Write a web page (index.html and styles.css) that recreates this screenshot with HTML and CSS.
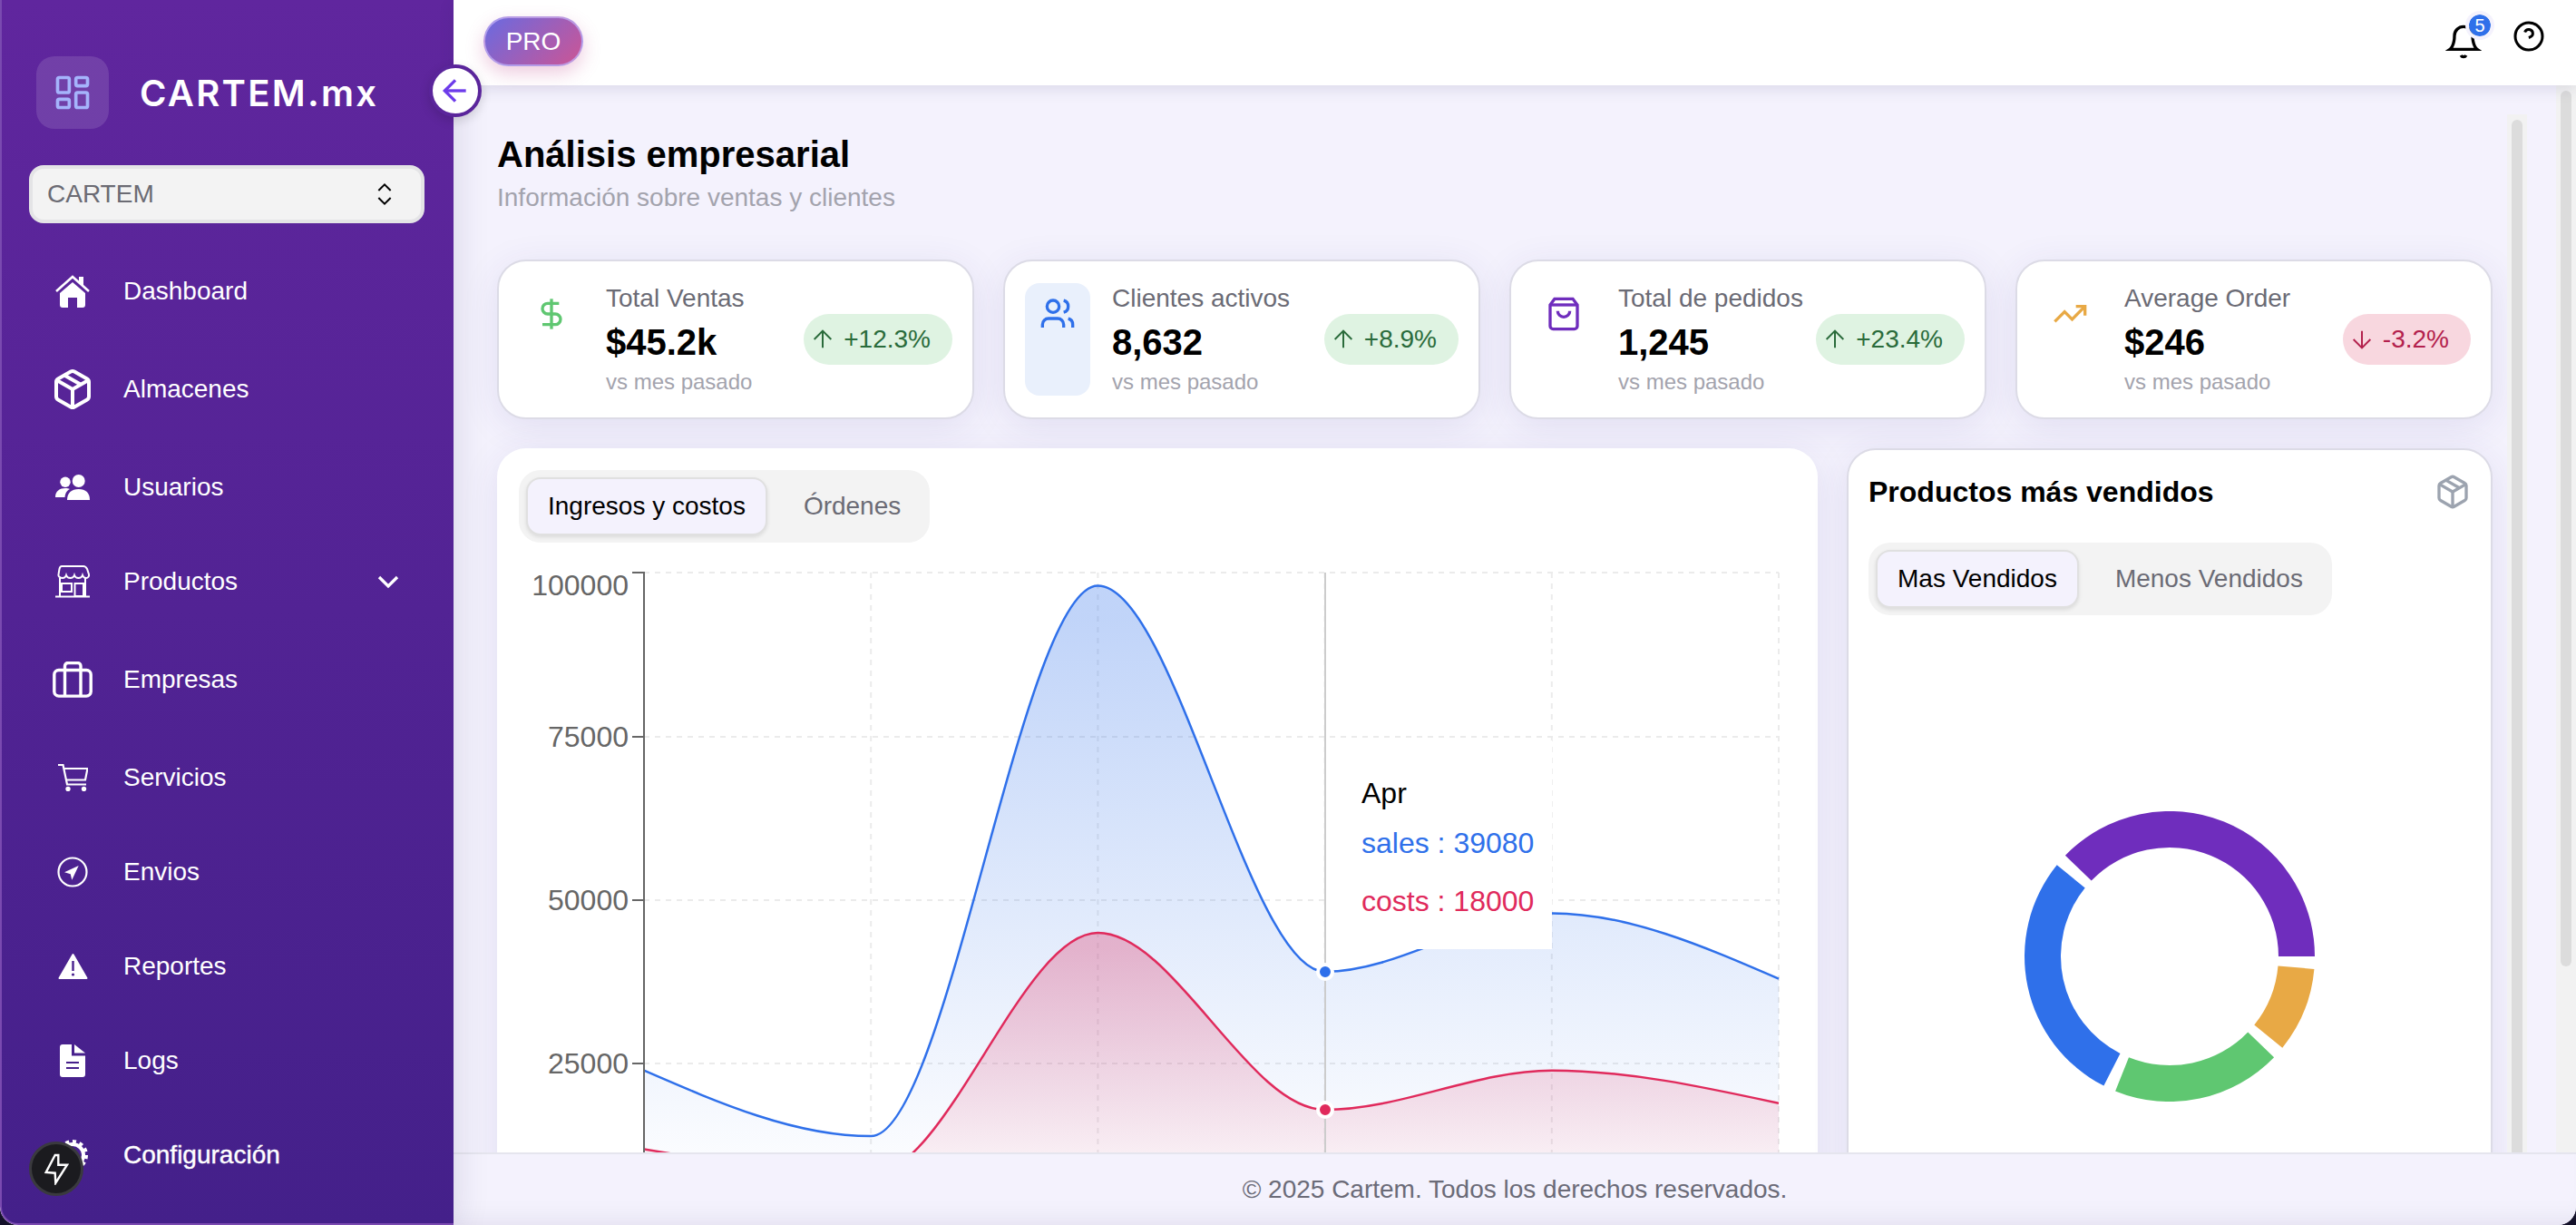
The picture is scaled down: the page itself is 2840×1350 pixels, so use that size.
FILE: index.html
```html
<!DOCTYPE html>
<html lang="es">
<head>
    <meta charset="UTF-8">
    <meta name="viewport" content="width=device-width, initial-scale=1.0">
    <title>Cartem - Análisis empresarial</title>
    <link rel="stylesheet" href="styles.css">
</head>
<body>
    <div class="app">
        <!-- Barra lateral -->
        <aside class="sidebar">
            <div class="logo-row">
                <div class="logo-box">
                    <svg class="logo-icon" viewBox="0 0 24 24"><rect x="3" y="3" width="7" height="9" rx="1"/><rect x="14" y="3" width="7" height="5" rx="1"/><rect x="14" y="12" width="7" height="9" rx="1"/><rect x="3" y="16" width="7" height="5" rx="1"/></svg>
                </div>
                <span class="logo-text">CARTEM.mx</span>
            </div>

            <div class="company-select">
                <span>CARTEM</span>
                <svg class="select-icon" viewBox="0 0 24 24"><path d="m7 15 5 5 5-5"/><path d="m7 9 5-5 5 5"/></svg>
            </div>

            <nav class="nav-list">
                <a class="nav-item nav-gap">
                    <span class="nav-icon">
                        <svg width="38" height="36" viewBox="0 0 38 36"><path d="M5 20 19 8l14 12v13a3 3 0 0 1-3 3h-6V25H14v11H8a3 3 0 0 1-3-3z" fill="#fff"/><path d="M1 18 19 2l18 16" fill="none" stroke="#fff" stroke-width="2.6"/><path d="M26 2h5v10l-5-4z" fill="#fff"/></svg>
                    </span>
                    Dashboard
                </a>
                <a class="nav-item nav-gap">
                    <span class="nav-icon">
                        <svg class="line-icon" width="48" height="48" viewBox="0 0 24 24"><path d="M11 21.73a2 2 0 0 0 2 0l7-4A2 2 0 0 0 21 16V8a2 2 0 0 0-1-1.73l-7-4a2 2 0 0 0-2 0l-7 4A2 2 0 0 0 3 8v8a2 2 0 0 0 1 1.73z"/><path d="M12 22V12"/><polyline points="3.29 7 12 12 20.71 7"/><path d="m7.5 4.27 9 5.15"/></svg>
                    </span>
                    Almacenes
                </a>
                <a class="nav-item">
                    <span class="nav-icon">
                        <svg width="38" height="28" viewBox="0 0 38 28" fill="#fff"><circle cx="25.7" cy="7" r="7"/><path d="M13 28c0-8 5-12 12.7-12S38 20 38 28z"/><circle cx="11" cy="8.3" r="5.7"/><path d="M0 25c0-7 5-10 11-10 2 0 3.500.3 5 1-4 2-5 5-5.500 9z"/></svg>
                    </span>
                    Usuarios
                </a>
                <a class="nav-item nav-gap">
                    <span class="nav-icon">
                        <svg width="38" height="36" viewBox="0 0 38 36" fill="none" stroke="#fff" stroke-width="2"><path d="M7 1h24c2 0 3 1 4 3l2 6c.5 2-1 4-3 4-3 0-4-3-4-3s-1 3-4.500 3S21 11 21 11s-1 3-4.500 3S12 11 12 11s-1 3-4 3c-3 0-5-2-4.500-4l1-6C5 2 6 1 7 1z"/><path d="M5 14v20M33 14v20M0 34.500h38"/><rect x="7" y="20" width="11" height="9"/><rect x="21.500" y="20" width="9.500" height="14"/></svg>
                    </span>
                    Productos
                    <svg class="nav-chevron" viewBox="0 0 24 24"><path d="m6 9 6 6 6-6"/></svg>
                </a>
                <a class="nav-item nav-gap">
                    <span class="nav-icon">
                        <svg width="44" height="40" viewBox="0 0 44 40" fill="none" stroke="#fff" stroke-width="3.400"><rect x="1.800" y="9.500" width="40.400" height="28.600" rx="5"/><path d="M13.500 9V5a3.500 3.500 0 0 1 3.500-3.500h10A3.500 3.500 0 0 1 31 5v4M13.500 9v29M31 9v29"/></svg>
                    </span>
                    Empresas
                </a>
                <a class="nav-item">
                    <span class="nav-icon">
                        <svg width="33" height="30" viewBox="0 0 33 30" fill="none" stroke="#fff" stroke-width="2.200"><path d="M0 1h5.500L10 22.500h21"/><path d="M6.500 5h26L30 17.500H9"/><circle cx="11" cy="27.500" r="1.600" fill="#fff"/><circle cx="28.500" cy="27.500" r="1.600" fill="#fff"/></svg>
                    </span>
                    Servicios
                </a>
                <a class="nav-item">
                    <span class="nav-icon">
                        <svg width="36" height="36" viewBox="-18 -18 36 36"><circle r="15.500" fill="none" stroke="#fff" stroke-width="2.200"/><path d="M6.700-7-.7 8.700-2.300 2.300-9 .3z" fill="#fff"/></svg>
                    </span>
                    Envios
                </a>
                <a class="nav-item">
                    <span class="nav-icon">
                        <svg width="33" height="30" viewBox="0 0 33 30"><path d="M16.500 2 31.500 28h-30z" fill="#fff" stroke="#fff" stroke-width="2" stroke-linejoin="round"/><rect x="15.300" y="9" width="2.400" height="11" fill="#4a228f"/><circle cx="16.500" cy="24" r="1.600" fill="#4a228f"/></svg>
                    </span>
                    Reportes
                </a>
                <a class="nav-item">
                    <span class="nav-icon">
                        <svg width="28" height="36" viewBox="0 0 28 36"><path d="M3 0h10v12.500h15V33a3 3 0 0 1-3 3H3a3 3 0 0 1-3-3V3a3 3 0 0 1 3-3z" fill="#fff"/><path d="M16 0l12 9.500H16z" fill="#fff"/><path d="M7 20h14M7 26h14" stroke="#47218c" stroke-width="2"/></svg>
                    </span>
                    Logs
                </a>
                <a class="nav-item nav-strong">
                    <span class="nav-icon">
                        <svg width="36" height="36" viewBox="-18 -18 36 36" fill="none" stroke="#fff"><circle r="12" stroke-width="4"/><circle r="15" stroke-width="4" stroke-dasharray="4 3.800"/></svg>
                    </span>
                    Configuración
                </a>
            </nav>

            <!-- Botón flotante -->
            <div class="bolt-badge">
                <svg width="32" height="36" viewBox="-16 -18 32 36"><path d="M-1.300-15-11.300 4l10 .7L-.7 15.700 12-4.300H2.300V-15z" fill="none" stroke="#fff" stroke-width="2.400"/></svg>
            </div>
        </aside>

        <button class="collapse-button" aria-label="Colapsar menú">
            <svg viewBox="0 0 24 24"><path d="m12 19-7-7 7-7"/><path d="M19 12H5"/></svg>
        </button>

        <div class="main">
            <header class="topbar">
                <span class="pro-badge">PRO</span>
                <div class="topbar-actions">
                    <span class="bell">
                        <svg class="line-dark" width="40" height="40" viewBox="0 0 24 24"><path d="M6 8a6 6 0 0 1 12 0c0 7 3 9 3 9H3s3-2 3-9"/><path d="M10.300 21a1.940 1.940 0 0 0 3.400 0"/></svg>
                        <span class="bell-count">5</span>
                    </span>
                    <svg class="line-dark" width="36" height="36" viewBox="0 0 24 24"><circle cx="12" cy="12" r="10"/><path d="M9.090 9a3 3 0 0 1 5.830 1c0 2-3 3-3 3"/><path d="M12 17h.01"/></svg>
                </div>
            </header>

            <div class="page-scroll">
                <div class="page-pane">
                    <div class="content-scroll">
                        <div class="content-body">
                            <h1 class="page-title">Análisis empresarial</h1>
                            <p class="page-subtitle">Información sobre ventas y clientes</p>

                            <!-- Tarjetas de resumen -->
                            <section class="stats">
                                <div class="stat-card">
                                    <div class="stat-icon">
                                        <svg class="icon-green" viewBox="0 0 24 24"><line x1="12" y1="2" x2="12" y2="22"/><path d="M17 5H9.500a3.500 3.500 0 0 0 0 7h5a3.500 3.500 0 0 1 0 7H6"/></svg>
                                    </div>
                                    <div class="stat-text">
                                        <p class="stat-label">Total Ventas</p>
                                        <p class="stat-value">$45.2k</p>
                                        <p class="stat-note">vs mes pasado</p>
                                    </div>
                                    <span class="trend trend-up">
                                        <svg viewBox="0 0 24 24"><path d="m5 12 7-7 7 7"/><path d="M12 19V5"/></svg>
                                        +12.3%
                                    </span>
                                </div>
                                <div class="stat-card">
                                    <div class="stat-icon stat-icon-hover">
                                        <svg class="icon-blue" viewBox="0 0 24 24"><path d="M16 21v-2a4 4 0 0 0-4-4H6a4 4 0 0 0-4 4v2"/><circle cx="9" cy="7" r="4"/><path d="M22 21v-2a4 4 0 0 0-3-3.870"/><path d="M16 3.130a4 4 0 0 1 0 7.750"/></svg>
                                    </div>
                                    <div class="stat-text">
                                        <p class="stat-label">Clientes activos</p>
                                        <p class="stat-value">8,632</p>
                                        <p class="stat-note">vs mes pasado</p>
                                    </div>
                                    <span class="trend trend-up">
                                        <svg viewBox="0 0 24 24"><path d="m5 12 7-7 7 7"/><path d="M12 19V5"/></svg>
                                        +8.9%
                                    </span>
                                </div>
                                <div class="stat-card">
                                    <div class="stat-icon">
                                        <svg class="icon-purple" viewBox="0 0 24 24"><path d="M6 2 3 6v14a2 2 0 0 0 2 2h14a2 2 0 0 0 2-2V6l-3-4z"/><path d="M3 6h18"/><path d="M16 10a4 4 0 0 1-8 0"/></svg>
                                    </div>
                                    <div class="stat-text">
                                        <p class="stat-label">Total de pedidos</p>
                                        <p class="stat-value">1,245</p>
                                        <p class="stat-note">vs mes pasado</p>
                                    </div>
                                    <span class="trend trend-up">
                                        <svg viewBox="0 0 24 24"><path d="m5 12 7-7 7 7"/><path d="M12 19V5"/></svg>
                                        +23.4%
                                    </span>
                                </div>
                                <div class="stat-card">
                                    <div class="stat-icon">
                                        <svg class="icon-orange" viewBox="0 0 24 24"><polyline points="22 7 13.500 15.500 8.500 10.500 2 17"/><polyline points="16 7 22 7 22 13"/></svg>
                                    </div>
                                    <div class="stat-text">
                                        <p class="stat-label">Average Order</p>
                                        <p class="stat-value">$246</p>
                                        <p class="stat-note">vs mes pasado</p>
                                    </div>
                                    <span class="trend trend-down">
                                        <svg viewBox="0 0 24 24"><path d="M12 5v14"/><path d="m19 12-7 7-7-7"/></svg>
                                        -3.2%
                                    </span>
                                </div>
                            </section>

                            <section class="charts">
                                <!-- Gráfica de ingresos -->
                                <div class="chart-card">
                                    <div class="tabs">
                                        <span class="tab tab-active">Ingresos y costos</span>
                                        <span class="tab">Órdenes</span>
                                    </div>
                                    <div class="chart-wrap">
                                        <svg class="area-chart" width="1408" height="780" viewBox="572 614 1408 780">
                                            <defs>
                                                <linearGradient id="salesFill" x1="0" y1="0" x2="0" y2="1">
                                                    <stop offset="0.05" stop-color="#2f70ea" stop-opacity="0.3"/>
                                                    <stop offset="0.95" stop-color="#2f70ea" stop-opacity="0"/>
                                                </linearGradient>
                                                <linearGradient id="costsFill" x1="0" y1="0" x2="0" y2="1">
                                                    <stop offset="0.05" stop-color="#e02a5c" stop-opacity="0.3"/>
                                                    <stop offset="0.95" stop-color="#e02a5c" stop-opacity="0"/>
                                                </linearGradient>
                                            </defs>
                                            <g class="grid-lines">
                                                <path d="M710 631H1961M710 812H1961M710 992H1961M710 1172H1961"/>
                                                <path d="M960.200 631V1353M1210.400 631V1353M1460.600 631V1353M1710.800 631V1353M1961 631V1353"/>
                                            </g>
                                            <path d="M710 1179.700C793.400 1215.900 876.800 1252.100 960.200 1252.100C1043.600 1252.100 1127 645.400 1210.400 645.400C1293.800 645.400 1377.200 1070.800 1460.600 1070.800C1544 1070.800 1627.400 1006.400 1710.800 1006.400C1794.200 1006.400 1877.600 1042.500 1961 1078.600V1353H710Z" fill="url(#salesFill)"/>
                                            <path d="M710 1179.700C793.400 1215.900 876.800 1252.100 960.200 1252.100C1043.600 1252.100 1127 645.400 1210.400 645.400C1293.800 645.400 1377.200 1070.800 1460.600 1070.800C1544 1070.800 1627.400 1006.400 1710.800 1006.400C1794.200 1006.400 1877.600 1042.500 1961 1078.600" class="line-sales"/>
                                            <path d="M710 1266.400C793.400 1280.400 876.800 1294.500 960.200 1294.500C1043.600 1294.500 1127 1028.100 1210.400 1028.100C1293.800 1028.100 1377.200 1223 1460.600 1223C1544 1223 1627.400 1179.700 1710.800 1179.700C1794.200 1179.700 1877.600 1197.800 1961 1215.800V1353H710Z" fill="url(#costsFill)"/>
                                            <path d="M710 1266.400C793.400 1280.400 876.800 1294.500 960.200 1294.500C1043.600 1294.500 1127 1028.100 1210.400 1028.100C1293.800 1028.100 1377.200 1223 1460.600 1223C1544 1223 1627.400 1179.700 1710.800 1179.700C1794.200 1179.700 1877.600 1197.800 1961 1215.800" class="line-costs"/>
                                            <path class="axis-line" d="M697 631H710V1353M697 812H710M697 992H710M697 1172H710"/>
                                            <text class="axis-label" x="693" y="656">100000</text>
                                            <text class="axis-label" x="693" y="823">75000</text>
                                            <text class="axis-label" x="693" y="1003">50000</text>
                                            <text class="axis-label" x="693" y="1183">25000</text>
                                            <line class="cursor-line" x1="1461" y1="631" x2="1461" y2="1353"/>
                                            <circle cx="1461" cy="1071" r="8" fill="#2f70ea" stroke="#fff" stroke-width="4"/>
                                            <circle cx="1461" cy="1223" r="8" fill="#e02a5c" stroke="#fff" stroke-width="4"/>
                                        </svg>
                                        <div class="chart-tooltip">
                                            <p class="tooltip-title">Apr</p>
                                            <p class="tooltip-row tooltip-sales">sales : 39080</p>
                                            <p class="tooltip-row tooltip-costs">costs : 18000</p>
                                        </div>
                                    </div>
                                </div>

                                <!-- Productos más vendidos -->
                                <div class="side-card">
                                    <div class="side-head">
                                        <h2 class="side-title">Productos más vendidos</h2>
                                        <svg class="side-icon" viewBox="0 0 24 24"><path d="M11 21.730a2 2 0 0 0 2 0l7-4A2 2 0 0 0 21 16V8a2 2 0 0 0-1-1.730l-7-4a2 2 0 0 0-2 0l-7 4A2 2 0 0 0 3 8v8a2 2 0 0 0 1 1.730z"/><path d="M12 22V12"/><polyline points="3.290 7 12 12 20.710 7"/><path d="m7.500 4.270 9 5.150"/></svg>
                                    </div>
                                    <div class="tabs">
                                        <span class="tab tab-active">Mas Vendidos</span>
                                        <span class="tab">Menos Vendidos</span>
                                    </div>
                                    <div class="donut-wrap">
                                        <svg width="320" height="320" viewBox="-160 -160 320 320">
                                            <path d="M160 0A160 160 0 0 0-115.100-111.200L-86.300-83.400A120 120 0 0 1 120 0Z" fill="#6f2dbd"/>
                                            <path d="M-124.300-100.700A160 160 0 0 0-72.600 142.600L-54.500 106.900A120 120 0 0 1-93.300-75.500Z" fill="#2f70ea"/>
                                            <path d="M-59.900 148.400A160 160 0 0 0 115.100 111.200L86.300 83.400A120 120 0 0 1-45 111.300Z" fill="#5fc771"/>
                                            <path d="M124.300 100.700A160 160 0 0 0 159.400 13.900L119.500 10.500A120 120 0 0 1 93.300 75.500Z" fill="#e8a945"/>
                                        </svg>
                                    </div>
                                </div>
                            </section>
                        </div>
                        <div class="scroll-rail"><div class="scroll-thumb content-thumb"></div></div>
                    </div>
                </div>
                <div class="scroll-rail"><div class="scroll-thumb page-thumb"></div></div>
            </div>

            <footer class="footer">© 2025 Cartem. Todos los derechos reservados.</footer>
        </div>
    </div>
</body>
</html>
```

FILE: styles.css
```css
/* Estilos generales */
* {
    box-sizing: border-box;
}

html,
body {
    height: 100%;
}

body {
    margin: 0;
    overflow: hidden;
    font-family: "Liberation Sans", Arial, sans-serif;
    background-color: #14112a;
    color: #000;
}

p,
h1,
h2 {
    margin: 0;
}

.app {
    position: relative;
    display: flex;
    height: 100vh;
    overflow: hidden;
    border-bottom-left-radius: 20px;
    border-bottom-right-radius: 20px;
    background: #f4f2fd;
}

/* Barra lateral */
.sidebar {
    position: relative;
    z-index: 2;
    flex: 0 0 500px;
    padding-top: 62px;
    background: linear-gradient(180deg, #60269e 0%, #44208a 100%);
    border-left: 2px solid #7a4ab0;
    border-bottom: 2px solid #7a4ab0;
    border-bottom-left-radius: 20px;
    box-shadow: 0 0 40px rgba(30, 20, 80, 0.14);
}

.logo-row {
    display: flex;
    align-items: center;
    gap: 34px;
    padding-left: 38px;
}

.logo-box {
    display: flex;
    align-items: center;
    justify-content: center;
    width: 80px;
    height: 80px;
    border-radius: 20px;
    background: rgba(255, 255, 255, 0.12);
}

.logo-icon {
    width: 44px;
    height: 44px;
    fill: none;
    stroke: #a5b4fc;
    stroke-width: 2;
}

.logo-text {
    font-family: Inter, "Liberation Sans", sans-serif;
    font-size: 40px;
    font-weight: 600;
    letter-spacing: 2.3px;
    color: #fff;
}

.company-select {
    display: flex;
    align-items: center;
    justify-content: space-between;
    height: 64px;
    margin: 40px 32px 0 30px;
    padding: 0 24px 0 16px;
    font-size: 28px;
    color: #6b6b73;
    background: #f3f3f3;
    border: 4px solid #e4e4e6;
    border-radius: 16px;
}

.select-icon {
    width: 32px;
    height: 32px;
    fill: none;
    stroke: #000;
    stroke-width: 1.5;
}

.nav-list {
    display: flex;
    flex-direction: column;
    margin-top: 23px;
}

.nav-item {
    display: flex;
    align-items: center;
    gap: 26px;
    height: 104px;
    padding: 0 52px 0 48px;
    font-size: 28px;
    color: #fff;
}

.nav-gap {
    margin-bottom: 4px;
}

.nav-strong {
    -webkit-text-stroke: 0.4px #fff;
}

.nav-icon {
    display: flex;
    align-items: center;
    justify-content: center;
    flex: 0 0 60px;
}

.line-icon {
    fill: none;
    stroke: #fff;
    stroke-width: 2;
}

.nav-chevron {
    width: 40px;
    height: 40px;
    margin-left: auto;
    fill: none;
    stroke: #fff;
    stroke-width: 2;
}

.bolt-badge {
    position: absolute;
    left: 30px;
    top: 1258px;
    display: flex;
    align-items: center;
    justify-content: center;
    width: 60px;
    height: 60px;
    border-radius: 50%;
    background: #1b1b1f;
    border: 3px solid #3a3a3e;
}

.collapse-button {
    position: absolute;
    z-index: 4;
    left: 473px;
    top: 71px;
    display: flex;
    align-items: center;
    justify-content: center;
    width: 58px;
    height: 58px;
    padding: 0;
    border: 4px solid #5a259b;
    border-radius: 50%;
    background: #fff;
    box-shadow: 0 4px 12px rgba(0, 0, 0, 0.15);
}

.collapse-button svg {
    width: 40px;
    height: 40px;
    fill: none;
    stroke: #6d3bea;
    stroke-width: 2;
}

/* Área principal */
.main {
    flex: 1;
    display: flex;
    flex-direction: column;
    min-width: 0;
}

.topbar {
    position: relative;
    z-index: 3;
    display: flex;
    align-items: center;
    justify-content: space-between;
    flex: 0 0 94px;
    padding: 0 34px 0 33px;
    background: #fff;
    box-shadow: 0 4px 16px rgba(40, 30, 90, 0.12);
}

.pro-badge {
    display: flex;
    align-items: center;
    justify-content: center;
    width: 110px;
    height: 55px;
    margin-bottom: 3px;
    font-size: 28px;
    color: #fff;
    border: 2px solid rgba(190, 170, 240, 0.8);
    border-radius: 28px;
    background: linear-gradient(135deg, #6a6ae0 0%, #cc5595 100%);
    box-shadow: 0 8px 20px rgba(200, 85, 150, 0.3);
}

.topbar-actions {
    display: flex;
    align-items: flex-start;
    gap: 34px;
    margin-top: -6px;
}

.bell {
    position: relative;
    display: block;
    height: 40px;
    margin-top: 4px;
}

.line-dark {
    display: block;
    fill: none;
    stroke: #000;
    stroke-width: 2;
}

.bell-count {
    position: absolute;
    top: -14px;
    right: -14px;
    display: flex;
    align-items: center;
    justify-content: center;
    width: 32px;
    height: 32px;
    font-size: 20px;
    color: #fff;
    background: #2f70ea;
    background-clip: padding-box;
    border: 4px solid #f4f2fd;
    border-radius: 50%;
}

/* Contenido con sus barras de desplazamiento */
.page-scroll {
    flex: 1;
    display: flex;
    min-height: 0;
    overflow: hidden;
}

.page-pane {
    flex: 1;
    min-width: 0;
    padding: 32px 32px 0;
}

.content-scroll {
    display: flex;
    height: 1351px;
}

.content-body {
    flex: 1;
    min-width: 0;
    padding: 16px;
}

.scroll-rail {
    flex: 0 0 22px;
    padding: 6px 5px;
    background: #f2f2f2;
}

.scroll-thumb {
    background: #dcdcdc;
    border-radius: 6px;
}

.page-thumb {
    height: 965px;
}

.content-thumb {
    height: 1280px;
}

.page-title {
    font-size: 40px;
    line-height: 56px;
    font-weight: bold;
}

.page-subtitle {
    font-size: 28px;
    line-height: 40px;
    color: #a3a3ad;
}

/* Tarjetas de resumen */
.stats {
    display: grid;
    grid-template-columns: repeat(4, 1fr);
    gap: 32px;
    margin-top: 48px;
}

.stat-card {
    display: flex;
    align-items: center;
    height: 176px;
    padding: 24px;
    background: #fff;
    border: 2px solid #dcdbe6;
    border-radius: 32px;
    box-shadow: 0 8px 40px rgba(60, 50, 140, 0.1);
}

.stat-icon {
    flex: 0 0 72px;
    align-self: stretch;
    margin-left: -2px;
    padding: 14px 16px;
    border-radius: 16px;
}

.stat-icon svg {
    display: block;
    width: 40px;
    height: 40px;
    fill: none;
    stroke-width: 2;
}

.stat-icon-hover {
    background: #e9f0fc;
}

.icon-green {
    stroke: #5fc771;
}

.icon-blue {
    stroke: #2f70ea;
}

.icon-purple {
    stroke: #6f2dbd;
}

.icon-orange {
    stroke: #e8a945;
}

.stat-text {
    margin-left: 24px;
    padding-bottom: 2px;
}

.stat-label {
    font-size: 28px;
    line-height: 40px;
    color: #6b6b75;
}

.stat-value {
    font-size: 40px;
    line-height: 56px;
    font-weight: bold;
}

.stat-note {
    font-size: 24px;
    line-height: 32px;
    color: #a3a3ad;
}

.trend {
    display: flex;
    align-items: center;
    gap: 7px;
    height: 56px;
    margin-left: auto;
    margin-right: -2px;
    padding: 0 24px 0 5px;
    font-size: 28px;
    border-radius: 28px;
}

.trend svg {
    width: 32px;
    height: 32px;
    fill: none;
    stroke: currentColor;
    stroke-width: 1.5;
}

.trend-up {
    color: #2a6b3b;
    background: #dff3e2;
}

.trend-down {
    color: #b3214d;
    background: #f8d7df;
}

/* Gráficas */
.charts {
    display: grid;
    grid-template-columns: 1fr 712px;
    gap: 32px;
    margin-top: 32px;
}

.chart-card {
    padding: 24px;
    background: #fff;
    border-radius: 32px;
    box-shadow: 0 8px 40px rgba(60, 50, 140, 0.1);
}

.side-card {
    padding: 22px;
    background: #fff;
    border: 2px solid #dcdbe6;
    border-radius: 32px;
    box-shadow: 0 8px 40px rgba(60, 50, 140, 0.1);
}

.tabs {
    display: inline-flex;
    gap: 16px;
    height: 80px;
    padding: 8px;
    background: #f3f3f3;
    border-radius: 24px;
}

.tab {
    display: flex;
    align-items: center;
    padding: 0 22px;
    font-size: 28px;
    color: #6b6b75;
    border: 2px solid transparent;
    border-radius: 16px;
}

.tab-active {
    color: #000;
    background: #f4f2fd;
    border-color: #e0e0e0;
    box-shadow: 0 2px 4px rgba(0, 0, 0, 0.1);
}

.chart-wrap {
    position: relative;
    margin-top: 16px;
}

.area-chart {
    display: block;
}

.grid-lines path {
    fill: none;
    stroke: #ebebeb;
    stroke-width: 2;
    stroke-dasharray: 6 6;
}

.line-sales,
.line-costs {
    fill: none;
    stroke-width: 2.5;
}

.line-sales {
    stroke: #2f70ea;
}

.line-costs {
    stroke: #e02a5c;
}

.axis-line {
    fill: none;
    stroke: #666;
    stroke-width: 2;
}

.axis-label {
    font-size: 32px;
    text-anchor: end;
    fill: #666;
}

.cursor-line {
    stroke: #ccc;
    stroke-width: 2;
}

/* Tooltip de la gráfica */
.chart-tooltip {
    position: absolute;
    left: 891px;
    top: 202px;
    width: 248px;
    height: 230px;
    padding: 38px 0 0 38px;
    font-size: 32px;
    background: #fff;
}

.tooltip-title {
    line-height: 40px;
    margin-bottom: 3px;
}

.tooltip-row {
    padding: 8px 0;
    line-height: 48px;
}

.tooltip-sales {
    color: #2f70ea;
}

.tooltip-costs {
    color: #e02a5c;
}

/* Productos más vendidos */
.side-head {
    display: flex;
    align-items: center;
    justify-content: space-between;
    margin-bottom: 32px;
}

.side-title {
    font-size: 32px;
    line-height: 48px;
    font-weight: bold;
}

.side-icon {
    width: 40px;
    height: 40px;
    fill: none;
    stroke: #9ca3af;
    stroke-width: 2;
}

.donut-wrap {
    display: flex;
    align-items: center;
    justify-content: center;
    height: 751px;
}

/* Pie de página */
.footer {
    position: relative;
    z-index: 1;
    display: flex;
    align-items: center;
    justify-content: center;
    flex: 0 0 80px;
    font-size: 28px;
    color: #6b6b78;
    background: #f4f2fd;
    border-top: 2px solid #e5e5ee;
    box-shadow: inset 0 -24px 30px -24px rgba(30, 20, 80, 0.1);
}
```
